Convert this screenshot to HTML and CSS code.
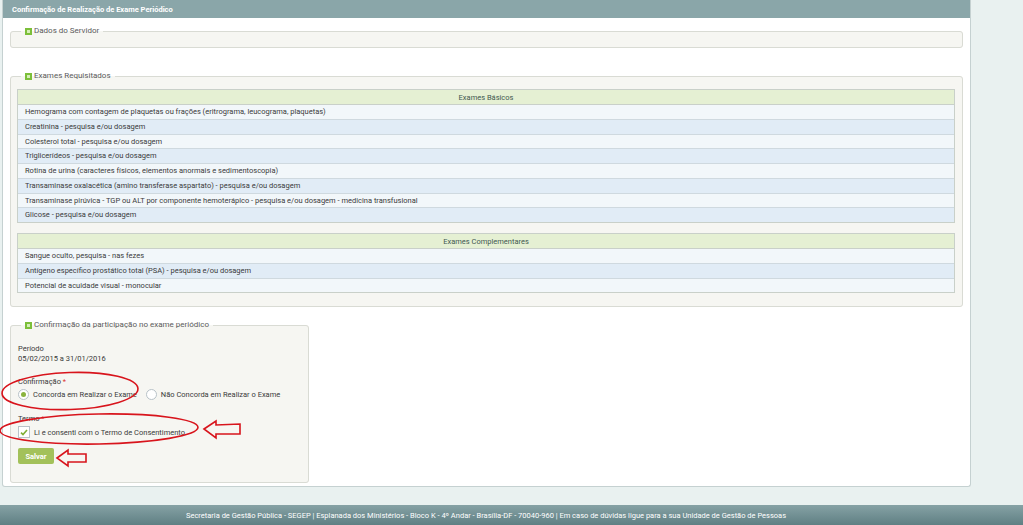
FILE: index.html
```html
<!DOCTYPE html>
<html lang="pt-BR">
<head>
<meta charset="utf-8">
<title>Confirmação de Realização de Exame Periódico</title>
<link rel="stylesheet" href="styles.css">
</head>
<body>
<div class="page">
  <div class="panel">
    <div class="panel-head">Confirmação de Realização de Exame Periódico</div>
    <div class="panel-body">
      <fieldset class="box box-dados">
        <legend><span class="tog"></span>Dados do Servidor</legend>
      </fieldset>

      <fieldset class="box box-exames">
        <legend><span class="tog"></span>Exames Requisitados</legend>
        <div class="box-inner exames-inner">
          <div class="grid">
            <div class="grid-head">Exames Básicos</div>
            <div class="row">Hemograma com contagem de plaquetas ou frações (eritrograma, leucograma, plaquetas)</div>
            <div class="row alt">Creatinina - pesquisa e/ou dosagem</div>
            <div class="row">Colesterol total - pesquisa e/ou dosagem</div>
            <div class="row alt">Triglicerídeos - pesquisa e/ou dosagem</div>
            <div class="row">Rotina de urina (caracteres físicos, elementos anormais e sedimentoscopia)</div>
            <div class="row alt">Transaminase oxalacética (amino transferase aspartato) - pesquisa e/ou dosagem</div>
            <div class="row">Transaminase pirúvica - TGP ou ALT por componente hemoterápico - pesquisa e/ou dosagem - medicina transfusional</div>
            <div class="row alt">Glicose - pesquisa e/ou dosagem</div>
          </div>
          <div class="grid">
            <div class="grid-head">Exames Complementares</div>
            <div class="row">Sangue oculto, pesquisa - nas fezes</div>
            <div class="row alt">Antígeno específico prostático total (PSA) - pesquisa e/ou dosagem</div>
            <div class="row">Potencial de acuidade visual - monocular</div>
          </div>
        </div>
      </fieldset>

      <fieldset class="box box-conf">
        <legend><span class="tog"></span>Confirmação da participação no exame periódico</legend>
        <div class="box-inner conf-inner">
          <div class="field f-periodo">
            <div class="lbl">Período</div>
            <div class="val">05/02/2015 a 31/01/2016</div>
          </div>
          <div class="field f-conf">
            <div class="lbl">Confirmação <span class="req">*</span></div>
            <div class="radios">
              <span class="opt"><span class="radio on"></span>Concorda em Realizar o Exame</span>
              <span class="opt"><span class="radio"></span>Não Concorda em Realizar o Exame</span>
            </div>
          </div>
          <div class="field f-termo">
            <div class="lbl">Termo <span class="req">*</span></div>
            <div class="check-row"><span class="check"><svg width="8" height="7" viewBox="0 0 8 7"><path d="M1 3.6 L3 5.6 L7 1" fill="none" stroke="#7fae35" stroke-width="1.6"/></svg></span>Li e consenti com o Termo de Consentimento</div>
          </div>
          <button class="btn" type="button">Salvar</button>
        </div>
      </fieldset>
    </div>
  </div>
  <div class="footer">Secretaria de Gestão Pública - SEGEP | Esplanada dos Ministérios - Bloco K - 4º Andar - Brasília-DF - 70040-960 | Em caso de dúvidas ligue para a sua Unidade de Gestão de Pessoas</div>

  <svg class="marks" width="1023" height="525" viewBox="0 0 1023 525">
    <g fill="none" stroke="#d8141c" stroke-width="1.6">
      <ellipse cx="70" cy="391" rx="68" ry="18.5" transform="rotate(-2 70 391)"/>
      <ellipse cx="99" cy="429" rx="99" ry="15" transform="rotate(-1 99 429)"/>
      <path d="M204 429 L216 421 L216 425 L240 424 L240 434 L216 434 L216 438 Z"/>
      <path d="M57 458 L68 450 L68 454 L86 454 L86 462 L68 462 L68 466 Z"/>
    </g>
  </svg>
</div>
</body>
</html>
```
FILE: styles.css
```css
html, body {
  margin: 0;
  padding: 0;
}
body {
  background: #e9f1f0;
  font-family: Roboto, "Liberation Sans", Arial, sans-serif;
  font-size: 7.5px;
  color: #3a3a3a;
}
.page {
  position: relative;
  width: 1023px;
  height: 525px;
  display: flex;
  flex-direction: column;
  overflow: hidden;
}
.panel {
  margin-left: 2px;
  width: 967px;
  height: 486px;
  background: #fff;
  border: 1px solid #c5d1d1;
  border-top: none;
  border-radius: 0 0 3px 3px;
}
.panel-head {
  height: 18px;
  line-height: 19px;
  background: #8aa6a9;
  color: #fff;
  font-weight: bold;
  padding-left: 9px;
  font-size: 7.5px;
}
.panel-body {
  padding: 8px 7px 0 7px;
}
.box {
  margin: 0;
  padding: 0;
  border: 1px solid #d9dbd4;
  border-radius: 3px;
  background: #f6f6f2;
  min-width: 0;
  box-sizing: border-box;
}
.box legend {
  margin-left: 10px;
  padding: 0 4px;
  color: #5a5a5a;
  font-size: 8px;
  line-height: 10px;
  display: flex;
  align-items: center;
}
.tog {
  display: inline-block;
  width: 3px;
  height: 3px;
  border: 2px solid #7cbf3a;
  background: #d6efb8;
  margin-right: 2px;
}
.box-dados {
  height: 22px;
}
.box-exames {
  margin-top: 23px;
}
.exames-inner {
  padding: 8px 7px 13px 6px;
}
.grid {
  border: 1px solid #c9d0c9;
}
.grid + .grid {
  margin-top: 10px;
}
.grid-head {
  height: 14px;
  line-height: 15px;
  background: #e5f0d3;
  text-align: center;
  color: #3f5850;
  border-bottom: 1px solid #c9d0c9;
}
.row {
  height: 13.75px;
  line-height: 14px;
  padding-left: 7px;
  background: #f2f7fa;
  border-bottom: 1px solid #cfd9df;
  white-space: nowrap;
}
.row:last-child {
  border-bottom: none;
}
.row.alt {
  background: #e1ecf6;
}
.box-conf {
  margin-top: 13px;
  width: 299px;
  height: 163px;
}
.conf-inner {
  padding: 14px 7px 0 7px;
}
.lbl, .val {
  line-height: 10px;
}
.f-periodo {
  margin-bottom: 13px;
}
.f-conf {
  margin-bottom: 14px;
}
.f-termo {
  margin-bottom: 10px;
}
.req {
  color: #d33;
}
.radios {
  display: flex;
  align-items: center;
  margin-top: 2px;
}
.opt {
  display: flex;
  align-items: center;
  margin-right: 9px;
}
.radio {
  width: 9px;
  height: 9px;
  border: 1px solid #b8c2c8;
  border-radius: 50%;
  background: #fff;
  margin-right: 4px;
  position: relative;
}
.radio.on::after {
  content: "";
  position: absolute;
  left: 2px;
  top: 2px;
  width: 5px;
  height: 5px;
  border-radius: 50%;
  background: #8ab33f;
}
.check-row {
  display: flex;
  align-items: center;
  margin-top: 2px;
}
.check {
  width: 10px;
  height: 10px;
  border: 1px solid #b8c2c8;
  background: #fff;
  margin-right: 4px;
  display: flex;
  align-items: center;
  justify-content: center;
}
.btn {
  display: block;
  width: 36px;
  height: 16px;
  padding: 0;
  border: none;
  border-radius: 2px;
  background: #a3c15a;
  color: #fff;
  font-family: inherit;
  font-size: 7.5px;
  font-weight: bold;
}
.footer {
  margin-top: auto;
  height: 20px;
  line-height: 22px;
  text-align: center;
  color: #fff;
  font-size: 7.5px;
  padding-right: 51px;
  background: linear-gradient(#86a2a5, #5f7f83);
}
.marks {
  position: absolute;
  left: 0;
  top: 0;
  pointer-events: none;
}
```
